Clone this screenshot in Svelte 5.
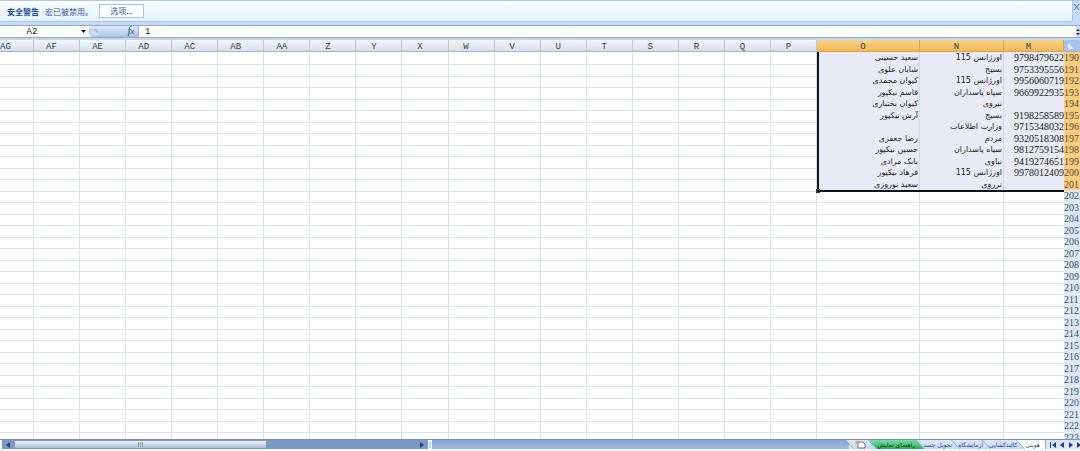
<script lang="ts">
	// Sheet runs right to left, so the columns are listed from AG down to M
	const narrow = ['AF', 'AE', 'AD', 'AC', 'AB', 'AA', 'Z', 'Y', 'X', 'W', 'V', 'U', 'T', 'S', 'R', 'Q', 'P'];
	const selected = ['O', 'N', 'M'];
	const firstRow = 190;

	// [column O, column N, column M]
	const records = [
		['سعید حسینی', 'اورژانس 115', '9798479622'],
		['شایان علوی', 'بسیج', '9753395556'],
		['کیوان محمدی', 'اورژانس 115', '9956060719'],
		['قاسم نیکپور', 'سپاه پاسداران', '9669922935'],
		['کیوان بختیاری', 'نیروی', ''],
		['آرش نیکپور', 'بسیج', '9198258589'],
		['', 'وزارت اطلاعات', '9715348032'],
		['رضا جعفری', 'مردم', '9320518308'],
		['حسین نیکپور', 'سپاه پاسداران', '9812759154'],
		['بابک مرادی', 'نیاوی', '9419274651'],
		['فرهاد نیکپور', 'اورژانس 115', '9978012409'],
		['سعید نوروزی', 'نرروی', '']
	];

	const rows = Array.from({ length: 34 }, (_, i) => ({
		number: firstRow + i,
		cells: records[i] ?? ['', '', ''],
		inRange: i < records.length,
		last: i === records.length - 1
	}));

	const sheets = ['تحویل جسد', 'آزمایشگاه', 'کالبدگشایی', 'هویتی'];

	let cellName = $state('A2');
	let formula = $state('1');
</script>

<div class="app">
	<div class="message-bar">
		<div class="message">
			<strong>安全警告</strong>
			<span>宏已被禁用。</span>
			<button class="options">选项...</button>
		</div>
		<button class="close" aria-label="Close">
			<svg width="6" height="6" viewBox="0 0 6 6"><path d="M1 0l5 6M6 0L1 6" stroke="#5a6f92" /></svg>
		</button>
	</div>

	<div class="formula-bar">
		<input class="name-box" aria-label="Name box" bind:value={cellName} />
		<button class="drop" aria-label="Names">
			<svg width="5" height="3" viewBox="0 0 5 3"><path d="M0 0h5L2.5 3z" fill="#111" /></svg>
		</button>
		<div class="fx">
			<svg width="10" height="10" viewBox="0 0 10 10">
				<circle cx="5" cy="5" r="4" fill="#d3e1f3" stroke="#c3d3ea" />
				<path d="M4 3q4 0 3 3" fill="none" stroke="#8a9cb8" />
			</svg>
			<button class="insert" aria-label="Insert function"><i>f<small>x</small></i></button>
		</div>
		<input class="formula" aria-label="Formula" bind:value={formula} />
		<button class="expand" aria-label="Expand formula bar">
			<svg width="4" height="8" viewBox="0 0 4 8"><path d="M0 3l2-2 2 2zM0 5l2 2 2-2z" fill="#223" /></svg>
		</button>
	</div>

	<div class="sheet">
		<table>
			<thead>
				<tr>
					<th class="first">AG</th>
					{#each narrow as name}
						<th>{name}</th>
					{/each}
					{#each selected as name}
						<th class="picked">{name}</th>
					{/each}
					<th class="corner" aria-label="Select all">
						<svg width="6" height="6" viewBox="0 0 6 6"><path d="M0 0v6h6z" fill="#e9f1fc" /></svg>
					</th>
				</tr>
			</thead>
			<tbody>
				{#each rows as row}
					<tr class:range={row.inRange} class:last={row.last}>
						<td></td>
						{#each narrow as _}
							<td></td>
						{/each}
						<td class="data edge" dir="rtl">{row.cells[0]}</td>
						<td class="data" dir="rtl">{row.cells[1]}</td>
						<td class="data number">{row.cells[2]}</td>
						<th class="row-name" scope="row">{row.number}</th>
					</tr>
				{/each}
			</tbody>
		</table>
	</div>

	<div class="bottom">
		<div class="scroll">
			<button class="arrow" aria-label="Scroll left">
				<svg width="4" height="6" viewBox="0 0 4 6"><path d="M4 0v6L0 3z" fill="#2b4470" /></svg>
			</button>
			<div class="track">
				<div class="thumb"><span class="grip"></span></div>
			</div>
			<button class="arrow" aria-label="Scroll right">
				<svg width="4" height="6" viewBox="0 0 4 6"><path d="M0 0v6l4-3z" fill="#2b4470" /></svg>
			</button>
		</div>
		<span class="split"></span>
		<div class="filler"></div>
		<div class="tabs">
			<button class="tab new" aria-label="New sheet">
				<svg width="11" height="9" viewBox="0 0 11 9">
					<path d="M3 2h5l2 2v4H3z" fill="#fff" stroke="#5c76a3" />
					<path d="M2.5 0v5M0 2.5h5M1 1l3 3M4 1L1 4" stroke="#e59a2c" stroke-width=".8" />
				</svg>
			</button>
			<button class="tab green" dir="rtl">راهنمای نمایش</button>
			{#each sheets as name}
				<button class="tab" class:active={name === 'هویتی'} dir="rtl">{name}</button>
			{/each}
		</div>
		<div class="nav">
			<button aria-label="First sheet">
				<svg width="6" height="6" viewBox="0 0 6 6"><path d="M0 0h1v6H0zM6 0v6L2 3z" fill="#1c3f8a" /></svg>
			</button>
			<button aria-label="Previous sheet">
				<svg width="4" height="6" viewBox="0 0 4 6"><path d="M4 0v6L0 3z" fill="#1c3f8a" /></svg>
			</button>
			<button aria-label="Next sheet">
				<svg width="4" height="6" viewBox="0 0 4 6"><path d="M0 0v6l4-3z" fill="#1c3f8a" /></svg>
			</button>
			<button aria-label="Last sheet">
				<svg width="3" height="6" viewBox="0 0 3 6"><path d="M0 0v6l4-3z" fill="#1c3f8a" /></svg>
			</button>
		</div>
	</div>
</div>

<style>
	:global(body) {
		margin: 0;
		background: #f4f8fd;
	}

	.app {
		display: flex;
		flex-direction: column;
		height: 100vh;
		overflow: hidden;
		font-family: 'Liberation Serif', 'DejaVu Sans', 'Noto Sans CJK SC', serif;
		font-size: 10px;
		color: #222;
	}

	button,
	input {
		box-sizing: border-box;
		min-width: 0;
		margin: 0;
		padding: 0;
		border: 0;
		background: none;
		font: inherit;
		color: inherit;
	}

	svg {
		display: block;
	}

	/* Security warning */
	.message-bar {
		display: flex;
		flex: none;
		box-sizing: border-box;
		height: 25px;
		padding-bottom: 3px;
		border-top: 1px solid #a9c8ee;
		background: #c5dbf8;
		font-family: 'Noto Sans CJK SC', sans-serif;
		font-size: 8px;
		color: #2f5597;
	}

	.message {
		display: flex;
		flex: 1;
		align-items: center;
		gap: 6px;
		padding-left: 7px;
		border-right: 1px solid #a9c5e8;
		border-bottom: 1px solid #a9c5e8;
		background: linear-gradient(#fafdff, #e4f1fd);
	}

	.message strong {
		color: #1c4a9c;
	}

	.options {
		width: 45px;
		height: 14px;
		border: 1px solid #a9bfdf;
		background: #fdfeff;
		line-height: 12px;
	}

	.close {
		width: 7px;
		height: 12px;
	}

	/* Formula bar */
	.formula-bar {
		display: flex;
		flex: none;
		align-items: stretch;
		box-sizing: border-box;
		height: 13px;
		border-top: 1px solid #8fa9cc;
		border-bottom: 1px solid #8fa9cc;
		background: #fff;
	}

	.name-box {
		width: 64px;
		margin-right: 13px;
		text-align: center;
		font: 9px 'Liberation Mono', monospace;
	}

	.drop {
		display: flex;
		align-items: center;
		justify-content: center;
		width: 12px;
	}

	.fx {
		display: flex;
		align-items: center;
		justify-content: space-between;
		box-sizing: border-box;
		width: 50px;
		padding-right: 4px;
		border: 1px solid #9db7dc;
		border-width: 0 1px 0 1px;
		border-radius: 6px 0 0 6px;
		background: linear-gradient(#dfeafa, #a9c4ea);
	}

	.insert {
		font-size: 10px;
		line-height: 10px;
		color: #333;
	}

	.insert small {
		font-size: 8px;
	}

	.formula {
		flex: 1;
		padding-left: 6px;
		font: 9px 'Liberation Mono', monospace;
	}

	.expand {
		display: flex;
		align-items: center;
		justify-content: center;
		width: 4px;
		background: #c5dbf8;
	}

	/* Grid */
	.sheet {
		flex: 1;
		min-height: 0;
		overflow: hidden;
		border-top: 2px solid #c3d9f0;
		background: #fff;
	}

	table,
	thead {
		display: block;
	}

	tr {
		display: grid;
		grid-template-columns: 34px repeat(17, 1fr) 103px 84px 60px 16px;
	}

	th,
	td {
		box-sizing: border-box;
		min-width: 0;
		padding: 0;
		font-weight: normal;
	}

	thead th {
		height: 12px;
		padding-right: 10px;
		border-right: 1px solid #b3c7df;
		border-bottom: 1px solid #9eb6d3;
		background: linear-gradient(#f4f7fb, #d6dfeb);
		font: 9px/14px 'Liberation Mono', monospace;
		color: #2c4048;
		text-align: center;
	}

	thead .first {
		padding: 0;
		text-align: left;
	}

	thead .picked {
		border-color: #dfa048;
		background: linear-gradient(#f8d28b, #f0b955);
	}

	thead .corner {
		padding: 3px 0 0 4px;
		border-right: 0;
		background: #a9c4ec;
	}

	tbody {
		display: grid;
		grid-template-rows: repeat(34, 1fr);
		height: 391px;
	}

	tbody tr {
		min-height: 0;
	}

	td {
		border-right: 1px solid #dce1ec;
		border-bottom: 1px solid #dce1ec;
	}

	.data {
		position: relative;
		line-height: 12px;
		white-space: nowrap;
		text-align: right;
	}

	.data[dir] {
		padding-right: 1px;
		font-family: 'DejaVu Sans', sans-serif;
		font-size: 8px;
		text-align: start;
	}

	.data.number {
		border-right: 0;
	}

	.range .data {
		background: #e8eaf5;
		border-color: #d3d8e8;
	}

	.range .edge {
		border-left: 2px solid #111;
	}

	/* Bottom edge of the selection and its fill handle */
	.last .data::after {
		content: '';
		position: absolute;
		left: -1px;
		right: 0;
		bottom: -1px;
		height: 2px;
		background: #111;
	}

	.last .data:not(.number)::after {
		right: -2px;
		z-index: 1;
	}

	.last .edge::before {
		content: '';
		position: absolute;
		left: -3px;
		bottom: -2px;
		width: 4px;
		height: 4px;
		background: #333;
	}

	.row-name {
		border-bottom: 1px solid #b8cbe2;
		background: #dde8f4;
		line-height: 12px;
		color: #3c5468;
		text-align: left;
	}

	.range .row-name {
		border-color: #eeb45c;
		background: #fbcd83;
		color: #5c4a2c;
	}

	/* Scroll bar and sheet tabs */
	.bottom {
		display: flex;
		flex: none;
		box-sizing: border-box;
		height: 12px;
		padding-bottom: 2px;
		border-top: 1px solid #6b8fc2;
		background: #f0f6fd;
	}

	.scroll {
		display: flex;
		box-sizing: border-box;
		width: calc(40% - 4px);
		border-left: 2px solid #f4f8ff;
		background: #7998c4;
	}

	.arrow {
		display: flex;
		align-items: center;
		justify-content: center;
		width: 12px;
	}

	.track {
		flex: 1;
	}

	.thumb {
		display: flex;
		align-items: center;
		justify-content: center;
		box-sizing: border-box;
		width: 63%;
		height: 9px;
		border: 1px solid #8294b0;
		border-radius: 1px;
		background: linear-gradient(#f2f5fa, #a9bbd4);
	}

	.grip {
		width: 5px;
		height: 5px;
		background: repeating-linear-gradient(90deg, #8e99aa 0 1px, #cfd6e0 1px 2px);
	}

	.split {
		box-sizing: border-box;
		width: 4px;
		border: 1px solid #f4f8ff;
		background: #c4d4ea;
	}

	.filler {
		flex: 1;
		background: linear-gradient(#86a4d2, #a4bbe0);
	}

	.tabs {
		display: flex;
	}

	.tab {
		position: relative;
		z-index: 0;
		padding: 0 3px;
		font: 6px/9px 'DejaVu Sans', sans-serif;
		color: #2c4a80;
		white-space: nowrap;
	}

	/* Slanted tab shape behind the label */
	.tab::before {
		content: '';
		position: absolute;
		z-index: -1;
		inset: 0;
		border-left: 1px solid #7f9cc9;
		background: linear-gradient(#dce9fa, #c3d7f3);
		transform: skewX(42deg);
	}

	.new {
		padding: 0 6px;
	}

	.green {
		padding: 0 5px;
		color: #0b2c1b;
	}

	.green::before {
		background: linear-gradient(#7fdca0, #1fb558);
	}

	.active {
		padding: 0 5px;
	}

	.active::before {
		background: #fff;
	}

	.nav {
		display: flex;
		position: relative;
		align-items: center;
		justify-content: space-between;
		box-sizing: border-box;
		width: 35px;
		padding-left: 4px;
		border-left: 1px solid #8fa9cc;
		background: #d9e7f8;
	}
</style>
